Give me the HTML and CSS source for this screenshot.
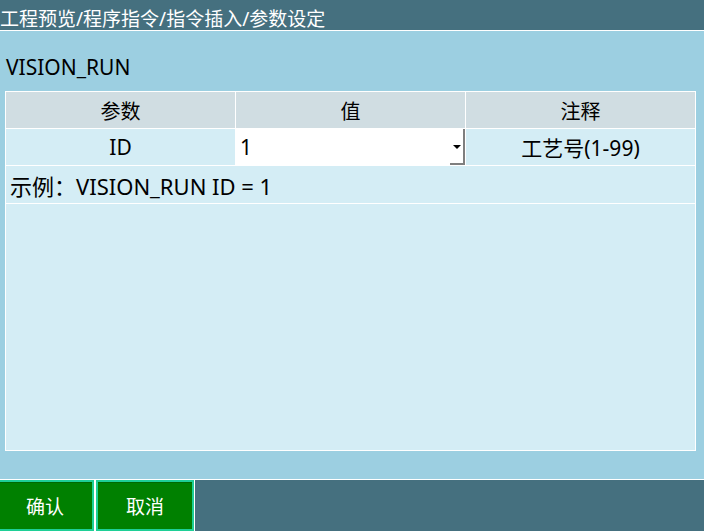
FILE: index.html
```html
<!DOCTYPE html>
<html lang="zh-CN">
<head>
    <meta charset="UTF-8">
    <title>参数设定</title>
    <link rel="stylesheet" href="styles.css">
</head>
<body>

<div class="screen">
    <!-- breadcrumb -->
    <div class="topbar">工程预览/程序指令/指令插入/参数设定</div>

    <div class="content">
        <div class="cmd-name">VISION_RUN</div>

        <div class="param-table">
            <div class="cell head">参数</div>
            <div class="cell head">值</div>
            <div class="cell head">注释</div>

            <div class="cell">ID</div>
            <div class="combo">
                <span class="combo-text">1</span>
                <span class="combo-btn"><span class="arrow"></span></span>
            </div>
            <div class="cell">工艺号(1-99)</div>

            <div class="cell example">示例：VISION_RUN ID = 1</div>
            <div class="cell blank"></div>
        </div>
    </div>

    <!-- confirm / cancel -->
    <div class="bottombar">
        <div class="btn-group">
            <button class="btn">确认</button>
            <button class="btn">取消</button>
        </div>
    </div>
</div>

</body>
</html>
```

FILE: styles.css
```css
body {
    margin: 0;
    font-family: "Noto Sans", "Noto Sans CJK SC", sans-serif;
    overflow: hidden;
}
.screen {
    width: 704px;
    height: 531px;
    display: flex;
    flex-direction: column;
    background-color: #9ccfe1;
}
.topbar {
    height: 31px;
    box-sizing: border-box;
    border-bottom: 1px solid #ffffff;
    background-color: #45707f;
    color: #ffffff;
    font-size: 19px;
    line-height: 22px;
    padding-top: 8px;
    white-space: nowrap;
}
.content {
    flex: 1;
    padding: 0 8px 28px 5px;
    display: flex;
    flex-direction: column;
}
.cmd-name {
    font-size: 21px;
    line-height: 24px;
    padding: 24px 0 0 1px;
    height: 36px;
    color: #000000;
}
.param-table {
    flex: 1;
    display: grid;
    grid-template-columns: 229px 229px 229px;
    grid-template-rows: 36px 36px 37px 1fr;
    gap: 1px;
    border: 1px solid #ffffff;
    background-color: #ffffff;
}
.cell {
    background-color: #d4edf5;
    font-size: 21px;
    display: flex;
    align-items: center;
    justify-content: center;
    color: #000000;
}
.head {
    font-size: 20px;
    background-color: #d0dde2;
}
.example {
    grid-column: 1 / 4;
    justify-content: flex-start;
    padding-left: 4px;
    font-size: 22px;
}
.blank {
    grid-column: 1 / 4;
}
.combo {
    background-color: #ffffff;
    margin-left: -1px;
    display: flex;
    align-items: stretch;
    font-size: 21px;
}
.combo-text {
    flex: 1;
    display: flex;
    align-items: center;
    padding-left: 5px;
}
.combo-btn {
    width: 13px;
    border-right: 2px solid #7f7f7f;
    border-bottom: 2px solid #7f7f7f;
    display: flex;
    align-items: center;
    justify-content: center;
}
.arrow {
    width: 0;
    height: 0;
    border-left: 4px solid transparent;
    border-right: 4px solid transparent;
    border-top: 4px solid #000000;
    margin-top: 1px;
}
.bottombar {
    height: 52px;
    box-sizing: border-box;
    border-top: 1px solid #ffffff;
    background-color: #45707f;
    display: flex;
}
.btn-group {
    display: flex;
    gap: 2px;
    margin-left: -4px;
    padding-right: 1px;
    background-color: #ffffff;
}
.btn {
    width: 98px;
    height: 100%;
    border: 2px solid #1ecf96;
    background-color: #008000;
    box-shadow: inset 0 1px 0 #006a00;
    color: #ffffff;
    font-family: "Noto Sans CJK SC", sans-serif;
    font-size: 19px;
    padding: 0;
    cursor: pointer;
}
```
